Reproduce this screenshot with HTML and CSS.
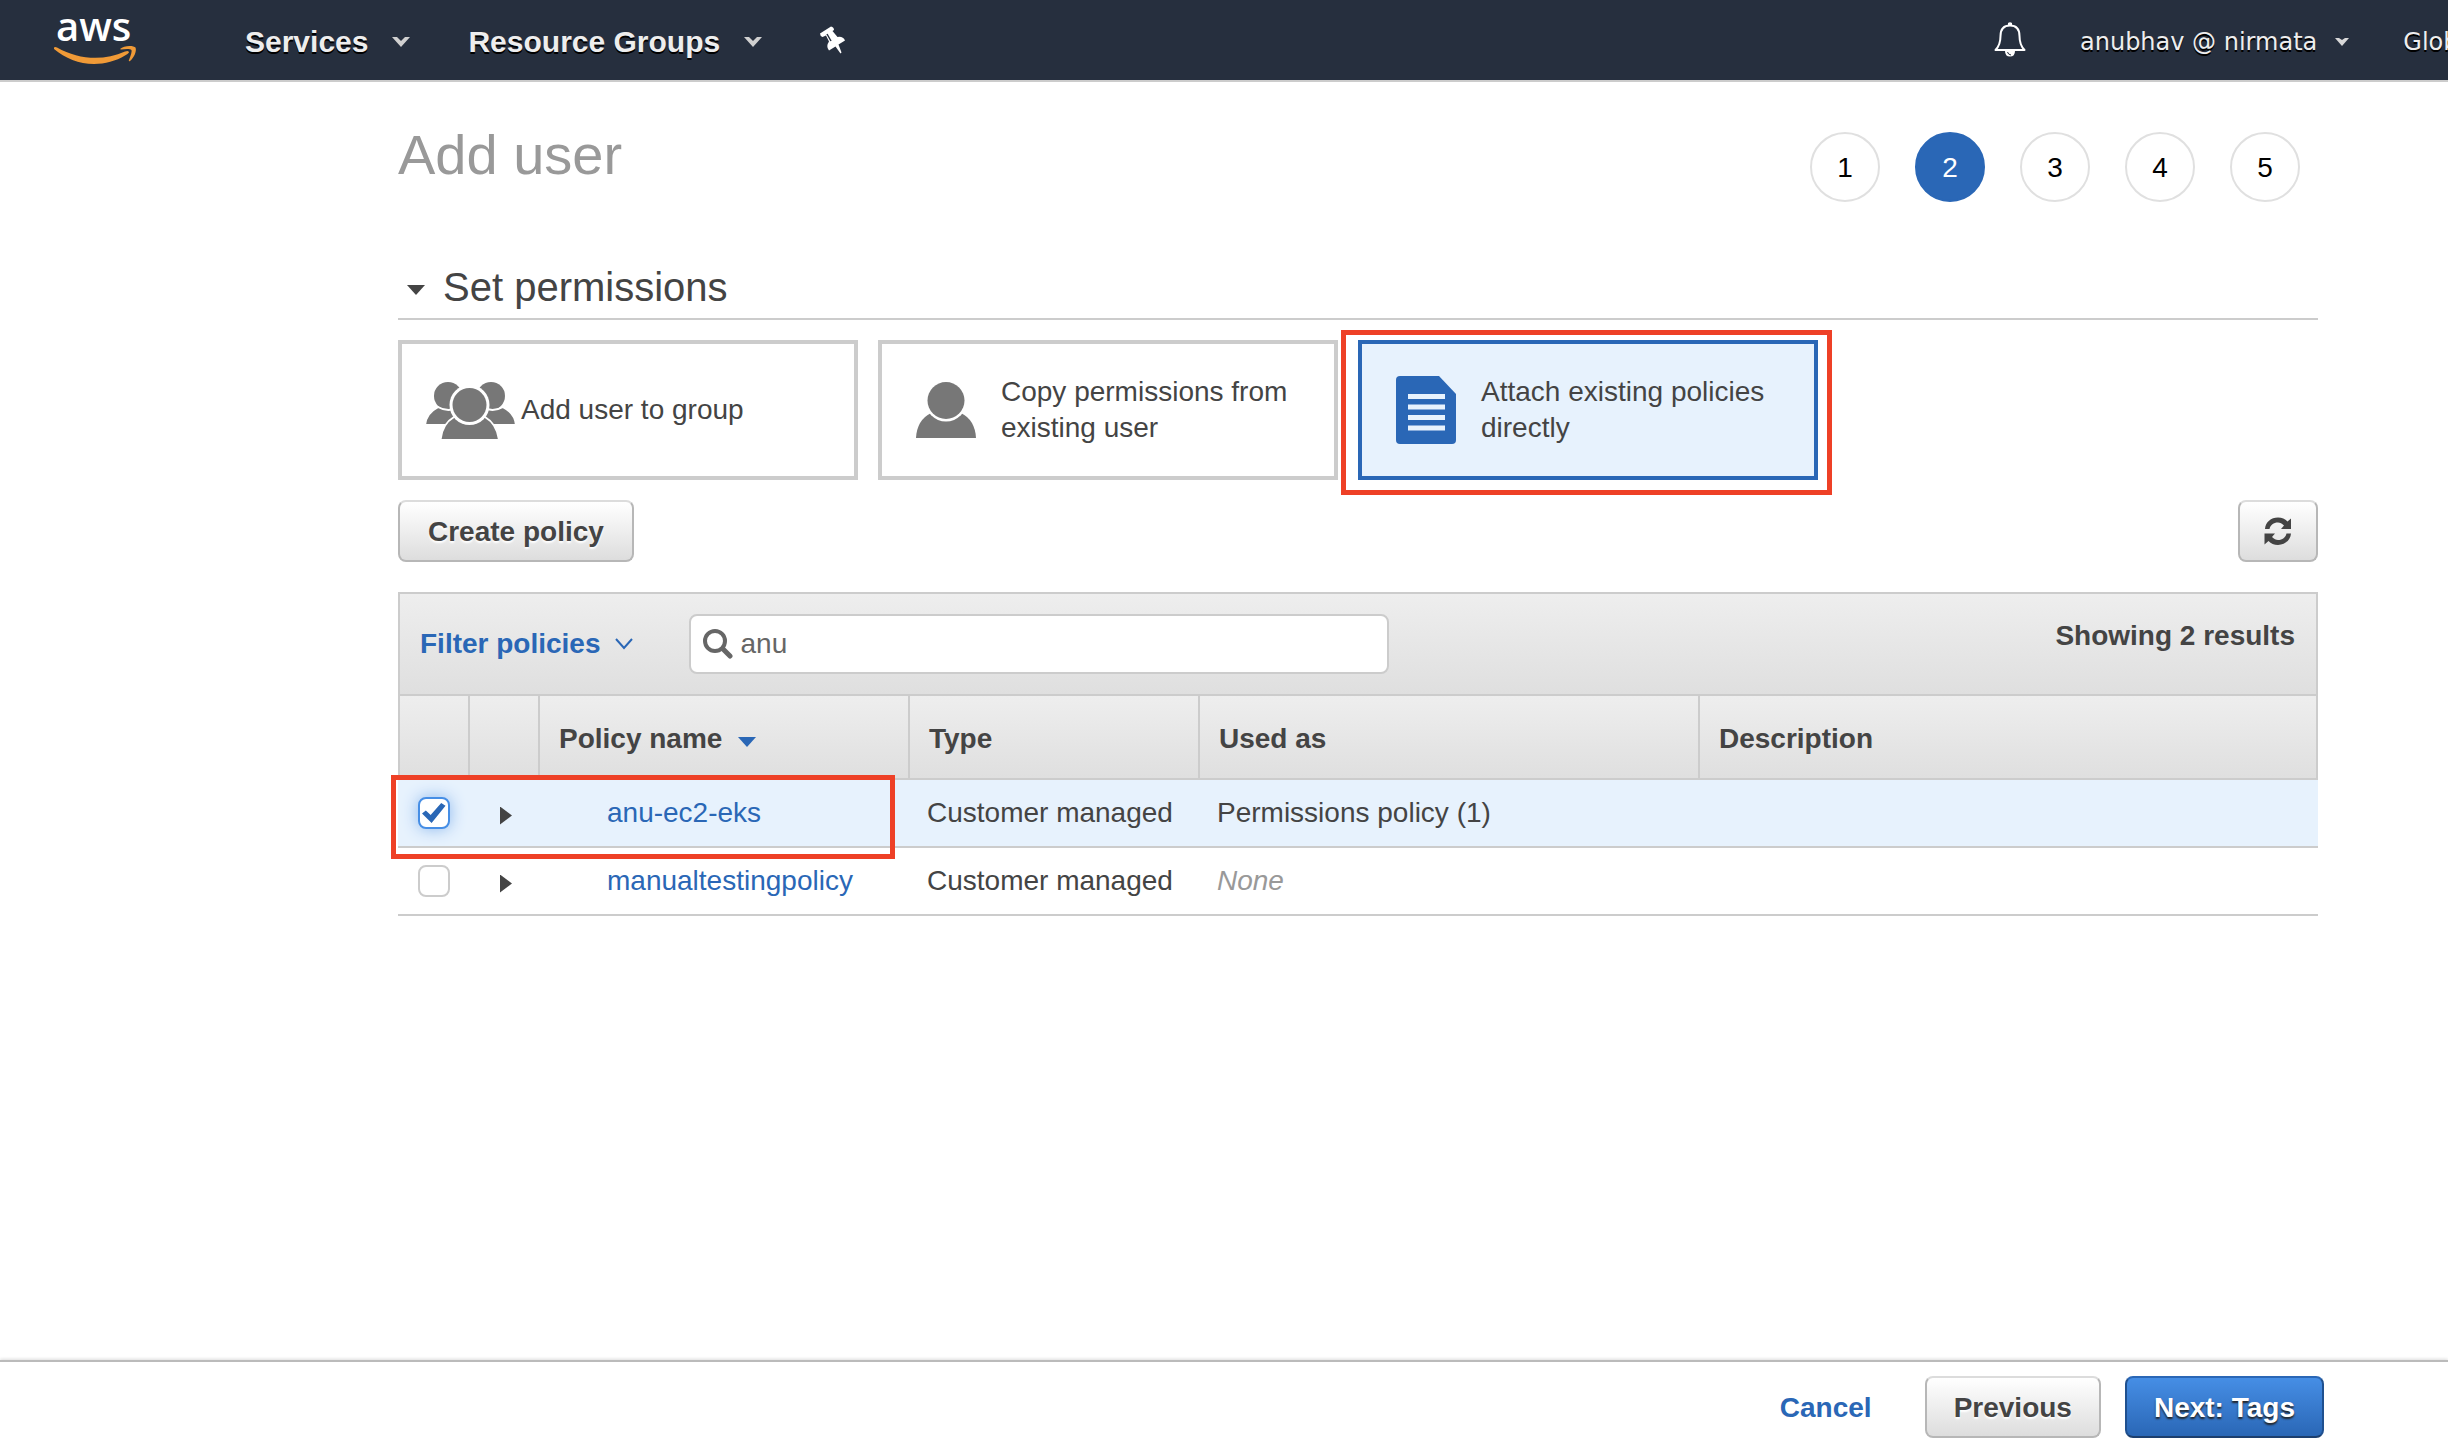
FILE: index.html
```html
<!DOCTYPE html>
<html lang="en">
<head>
<meta charset="utf-8">
<title>Add user</title>
<meta name="viewport" content="width=device-width, initial-scale=1">
<link rel="stylesheet" href="styles.css">
</head>
<body>
<header class="nav">
  <a class="nav-logo" href="#" aria-label="AWS home">
    <svg width="84" height="80" viewBox="0 -8 84 80" aria-hidden="true">
      <text class="logo-text" x="2" y="33">aws</text>
      <path fill="#f09a37" d="M0 39.500Q1 38.500 3 39.500C25 52 50 53 71 43.500Q75 42 75 44.500Q74 46 71 47.500C62 53 51 56 40 56C25 56 11 50 0 41Z"/>
      <path fill="#f09a37" d="M66 41C70 37 80 37.500 81.500 39.500C83 43 80 50 76 53C75 53.500 74.500 53 75 52C77 47 78 43.500 77.500 42C76 40.500 71 41 67 41.500Z"/>
    </svg>
  </a>
  <nav class="nav-menus" aria-label="Main">
    <button class="nav-menu" type="button">Services
      <svg width="18" height="10" viewBox="0 0 18 10" aria-hidden="true"><path fill="#d0d0d0" d="M0 0H5L9 4L13 0H18L9 10Z"/></svg>
    </button>
    <button class="nav-menu" type="button">Resource Groups
      <svg width="18" height="10" viewBox="0 0 18 10" aria-hidden="true"><path fill="#d0d0d0" d="M0 0H5L9 4L13 0H18L9 10Z"/></svg>
    </button>
    <button class="nav-pin" type="button" aria-label="Pin shortcuts">
      <svg width="26" height="28" viewBox="0 0 26 28" aria-hidden="true"><path fill="#fff" d="M0 7.500L11 .5Q14 1 14 4L12.500 5L17.500 11Q23 10 25 14.500L18.500 18.500L21.500 26.500L20.500 27.500L15.500 20.500L9 24.500Q5.500 20.500 9 15.500L6 9.500L2.500 11Q0 10 0 7.500Z"/><path stroke="#262f3e" stroke-width="1.500" d="M7 8L11 15"/></svg>
    </button>
  </nav>
  <div class="nav-account">
    <button class="nav-bell" type="button" aria-label="Notifications">
      <svg width="32" height="36" viewBox="0 0 32 36" aria-hidden="true"><path fill="none" stroke="#fff" stroke-width="2" stroke-linejoin="round" d="M16 3.500C9 3.500 6.500 8 6.500 14C6.500 22 4.500 25 1.500 28H30.500C27.500 25 25.500 22 25.500 14C25.500 8 23 3.500 16 3.500Z"/><path fill="#fff" d="M14 1Q16-.5 18 1V4H14ZM11 29H21Q21 34.500 16 34.500Q11 34.500 11 29Z"/><path fill="none" stroke="#262f3e" d="M13.500 30Q14 32.500 17 33"/></svg>
    </button>
    <button class="nav-menu nav-menu--small" type="button">anubhav @ nirmata
      <svg width="14" height="8" viewBox="0 0 14 8" aria-hidden="true"><path fill="#d8d8d8" d="M0 0H4L7 2L10 0H14L7 8Z"/></svg>
    </button>
    <button class="nav-menu nav-menu--small" type="button">Global</button>
  </div>
</header>

<main class="page">
  <div class="page-head">
    <h1 class="page-title">Add user</h1>
    <ol class="steps">
      <li class="step">1</li>
      <li class="step step--current" aria-current="step">2</li>
      <li class="step">3</li>
      <li class="step">4</li>
      <li class="step">5</li>
    </ol>
  </div>

  <h2 class="section-title">
    <svg class="section-caret" width="18" height="10" viewBox="0 0 18 10" aria-hidden="true"><path fill="#444" d="M0 0H18L9 10Z"/></svg>
    Set permissions
  </h2>

  <div class="options">
    <button class="option option--group" type="button" aria-pressed="false">
      <svg width="89" height="57" viewBox="0 0 89 57" aria-hidden="true">
        <g fill="#777"><circle cx="22" cy="14" r="14"/><circle cx="65" cy="14" r="14"/><path stroke="#fff" stroke-width="2" d="M-1 43Q0 31 12 25Q22 31 34 25V43ZM90 43Q89 31 77 25Q67 31 55 25V43Z"/></g>
        <path fill="#777" stroke="#fff" stroke-width="2" d="M14.500 58Q16 42 28 35H59Q71 42 73 58Z"/>
        <circle cx="43.500" cy="23" r="20" fill="#fff"/>
        <circle cx="43.500" cy="23" r="17" fill="#777"/>
      </svg>
      <span>Add user to group</span>
    </button>
    <button class="option" type="button" aria-pressed="false">
      <svg width="60" height="56" viewBox="0 0 60 56" aria-hidden="true">
        <path fill="#777" d="M0 56Q1 38 15 31H45Q59 38 60 56Z"/>
        <circle cx="30" cy="18.500" r="21" fill="#fff"/>
        <circle cx="30" cy="18.500" r="18.500" fill="#777"/>
      </svg>
      <span>Copy permissions from existing user</span>
    </button>
    <button class="option option--selected" type="button" aria-pressed="true">
      <svg width="60" height="68" viewBox="0 0 60 68" aria-hidden="true">
        <path fill="#2a67b6" d="M4 0H43L60 18V64Q60 68 56 68H4Q0 68 0 64V4Q0 0 4 0Z"/>
        <path fill="#e7f2fd" d="M12 18H49V23H12ZM12 28.500H49V33.500H12ZM12 39H49V44H12ZM12 49.500H49V54.500H12Z"/>
      </svg>
      <span>Attach existing policies directly</span>
    </button>
  </div>

  <div class="actions">
    <button class="btn" type="button">Create policy</button>
    <button class="btn btn--icon" type="button" aria-label="Refresh">
      <svg width="28" height="28" viewBox="0 0 28 28" aria-hidden="true"><path fill="#444" d="M1 12C1.500 5 7 .5 14 .5C18 .5 21 2 23.500 4.500L27 1.500V12H17L20 8.500C18 6.500 16 5.500 14 5.500C9.500 5.500 6.500 8 5.500 12ZM27 16.500C26.500 23 21 28 14 28C10 28 7 26.500 4.500 24L.5 27.500V16.500H11L8 20C10 22 12 23 14 23C18.500 23 21.500 20.500 22.500 16.500Z"/></svg>
    </button>
  </div>

  <div class="toolbar">
    <button class="filter" type="button">Filter policies
      <svg width="18" height="12" viewBox="0 0 18 12" aria-hidden="true"><path fill="none" stroke="#2a67b6" stroke-width="2" d="M1 1L9 10L17 1"/></svg>
    </button>
    <label class="search">
      <svg width="30" height="30" viewBox="0 0 30 30" aria-hidden="true"><circle cx="12" cy="12" r="10" fill="none" stroke="#666" stroke-width="4"/><path stroke="#666" stroke-width="5" stroke-linecap="round" d="M20 20L27 27"/></svg>
      <input class="search-input" type="text" value="anu" aria-label="Search policies">
    </label>
    <span class="results">Showing 2 results</span>
  </div>
  <table class="policies">
    <colgroup>
      <col class="col-check"><col class="col-expand"><col class="col-name"><col class="col-type"><col class="col-used"><col>
    </colgroup>
    <thead>
      <tr>
        <th></th>
        <th></th>
        <th scope="col">Policy name <svg class="sort" width="18" height="10" viewBox="0 0 18 10" aria-hidden="true"><path fill="#2a67b6" d="M0 0H18L9 10Z"/></svg></th>
        <th scope="col">Type</th>
        <th scope="col">Used as</th>
        <th scope="col">Description</th>
      </tr>
    </thead>
    <tbody>
      <tr class="row--selected">
        <td class="cell-check"><input class="check" type="checkbox" checked aria-label="Select anu-ec2-eks"><span class="callout callout--row"></span></td>
        <td class="cell-expand"><button class="expand" type="button" aria-label="Expand anu-ec2-eks"></button></td>
        <td class="cell-name"><a href="#">anu-ec2-eks</a></td>
        <td>Customer managed</td>
        <td>Permissions policy (1)</td>
        <td></td>
      </tr>
      <tr>
        <td class="cell-check"><input class="check" type="checkbox" aria-label="Select manualtestingpolicy"></td>
        <td class="cell-expand"><button class="expand" type="button" aria-label="Expand manualtestingpolicy"></button></td>
        <td class="cell-name"><a href="#">manualtestingpolicy</a></td>
        <td>Customer managed</td>
        <td class="none">None</td>
        <td></td>
      </tr>
    </tbody>
  </table>
</main>

<footer class="footer">
  <a class="cancel" href="#">Cancel</a>
  <button class="btn" type="button">Previous</button>
  <button class="btn btn--primary" type="button">Next: Tags</button>
</footer>
</body>
</html>
```

FILE: styles.css
```css
* {
  box-sizing: border-box;
}

body {
  margin: 0;
  min-height: 100vh;
  display: flex;
  flex-direction: column;
  overflow-x: hidden;
  background: #fff;
  color: #444;
  font: 28px/36px "Liberation Sans", Arial, sans-serif;
}

button {
  margin: 0;
  padding: 0;
  border: 0;
  background: none;
  color: inherit;
  font: inherit;
  cursor: pointer;
}

a {
  color: #2a67b6;
  text-decoration: none;
}

svg {
  display: block;
  flex: none;
}

/* Top navigation */
.nav {
  display: flex;
  align-items: center;
  height: 82px;
  padding-left: 54px;
  overflow: hidden;
  border-bottom: 2px solid #ccc;
  background: #262f3e;
  color: #eee;
}

.nav-logo {
  margin-right: 107px;
}

.logo-text {
  fill: #fff;
  font: 600 40px "Open Sans", sans-serif;
}

.nav-menus,
.nav-account {
  display: flex;
  align-items: center;
}

.nav-menus {
  gap: 58px;
}

.nav-account {
  flex: none;
  gap: 54px;
  width: 454px;
  margin-left: auto;
}

.nav-menu {
  display: flex;
  flex: none;
  align-items: center;
  gap: 24px;
  padding-top: 4px;
  font-size: 30px;
  font-weight: bold;
  text-shadow: 0 2px 0 #000;
  white-space: nowrap;
}

.nav-menu--small {
  gap: 18px;
  font: 24px/36px "DejaVu Sans", Verdana, sans-serif;
}

/* Page */
.page {
  flex: 1;
  padding: 38px 130px 60px 398px;
}

.page-head {
  display: flex;
  justify-content: space-between;
  align-items: flex-start;
}

.page-title {
  margin: 0;
  color: #999;
  font-size: 56px;
  font-weight: normal;
  line-height: 70px;
}

.steps {
  display: flex;
  gap: 35px;
  margin: 12px 18px 0 0;
  padding: 0;
  list-style: none;
}

.step {
  width: 70px;
  height: 70px;
  border: 2px solid #e0e0e0;
  border-radius: 50%;
  color: #000;
  line-height: 68px;
  text-align: center;
}

.step--current {
  border-color: #2a67b6;
  background: #2a67b6;
  color: #fff;
}

.section-title {
  display: flex;
  align-items: center;
  gap: 18px;
  margin: 54px 0 20px;
  padding: 2px 0 2px 9px;
  border-bottom: 2px solid #ccc;
  font-size: 40px;
  font-weight: normal;
  line-height: 58px;
}

.section-caret {
  margin-top: 6px;
}

/* Permission options */
.options {
  display: flex;
  gap: 20px;
}

.option {
  position: relative;
  display: flex;
  flex: 0 1 460px;
  align-items: center;
  gap: 25px;
  min-height: 140px;
  padding: 0 20px 0 34px;
  border: 4px solid #ccc;
  text-align: left;
}

.option--group {
  gap: 6px;
  padding-left: 24px;
}

.option--selected {
  border-color: #2a67b6;
  background: #e7f2fd;
}

.option--selected::after,
.callout {
  position: absolute;
  border: 5px solid #ee4026;
  pointer-events: none;
}

.option--selected::after {
  content: "";
  inset: -14px -18px -19px -21px;
}

/* Buttons */
.actions {
  display: flex;
  justify-content: space-between;
  margin: 20px 0 30px;
}

.btn {
  display: flex;
  align-items: center;
  justify-content: center;
  height: 62px;
  padding: 2px 28px 0;
  border: 2px solid #b7b7b7;
  border-top-color: #dcdcdc;
  border-radius: 8px;
  background: linear-gradient(#fff, #ddd);
  font-weight: bold;
  text-shadow: 0 2px 2px #fff;
}

.btn--icon {
  width: 80px;
  padding-top: 0;
}

.btn--primary {
  border-color: #1f508f;
  border-top-color: #2a67b6;
  border-bottom-color: #1c3f6e;
  background: linear-gradient(#468ee5, #2a67b6);
  color: #fff;
  text-shadow: 0 2px 2px #222;
}

/* Table toolbar */
.toolbar {
  display: flex;
  align-items: flex-start;
  height: 102px;
  padding: 20px 21px 0 20px;
  border: 2px solid #ccc;
  border-bottom: 0;
  background: linear-gradient(#eee, #dfdfdf);
}

.filter {
  display: flex;
  align-items: center;
  gap: 14px;
  margin-right: 56px;
  color: #2a67b6;
  font-weight: bold;
  line-height: 60px;
}

.search {
  display: flex;
  flex: 0 1 700px;
  align-items: center;
  gap: 8px;
  height: 60px;
  padding: 0 12px;
  border: 2px solid #ccc;
  border-radius: 8px;
  background: #fff;
}

.search-input {
  flex: 1;
  min-width: 0;
  padding: 0;
  border: 0;
  outline: 0;
  background: none;
  color: #666;
  font: inherit;
}

.results {
  margin-left: auto;
  font-weight: bold;
  line-height: 44px;
}

/* Policies table */
.policies {
  width: 100%;
  table-layout: fixed;
  border-spacing: 0;
}

.col-check { width: 72px; }
.col-expand { width: 70px; }
.col-name { width: 370px; }
.col-type { width: 290px; }
.col-used { width: 500px; }

th {
  height: 86px;
  padding: 3px 18px 0 19px;
  border: solid #ccc;
  border-width: 2px 2px 2px 0;
  background: linear-gradient(#eee, #dfdfdf);
  text-align: left;
}

th:first-child {
  border-left-width: 2px;
}

.sort {
  display: inline-block;
  margin-left: 8px;
  vertical-align: 1px;
}

td {
  height: 68px;
  padding: 0 0 0 17px;
  border-bottom: 2px solid #ccc;
}

.row--selected {
  background: #e7f2fd;
}

.cell-check {
  position: relative;
  padding-left: 20px;
}

.cell-expand {
  padding: 5px 0 0 30px;
}

.cell-name {
  padding-left: 67px;
}

.none {
  color: #999;
  font-style: italic;
}

.check {
  display: block;
  width: 32px;
  height: 32px;
  margin: 0;
  border: 2px solid #ccc;
  border-radius: 8px;
  background: #fff;
  appearance: none;
}

.check:checked {
  border-color: #468ee5;
  box-shadow: 0 0 16px #8db8ee;
}

.check:checked::before {
  content: "";
  display: block;
  width: 24px;
  height: 20px;
  margin: 4px 2px;
  background: #2a67b6;
  clip-path: polygon(0 52%, 16% 38%, 36% 60%, 80% 0, 98% 14%, 40% 100%);
}

.expand {
  display: block;
  width: 12px;
  height: 18px;
  background: #444;
  clip-path: polygon(0 0, 100% 50%, 0 100%);
}

.callout--row {
  z-index: 1;
  top: -5px;
  left: -7px;
  width: 504px;
  height: 84px;
}

/* Footer */
.footer {
  display: flex;
  align-items: center;
  justify-content: flex-end;
  gap: 24px;
  padding: 14px 124px;
  border-top: 2px solid #bbb;
  box-shadow: 0 -1px 3px #ddd;
}

.footer .btn {
  padding: 2px 27px 0;
}

.cancel {
  margin-right: 29px;
  padding-top: 2px;
  font-weight: bold;
}
```
